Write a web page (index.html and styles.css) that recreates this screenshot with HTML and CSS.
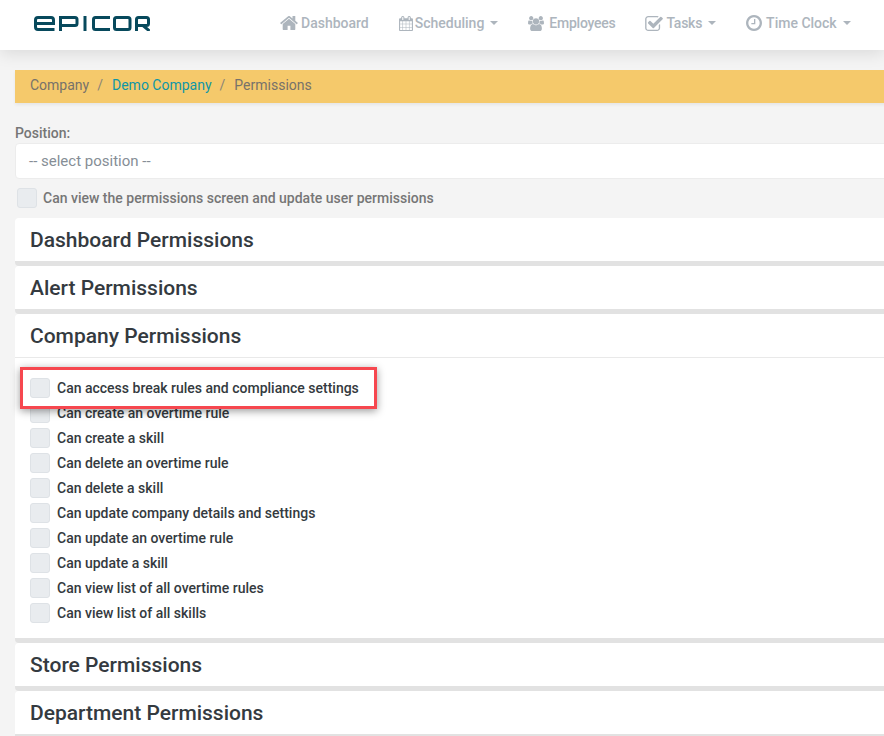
FILE: index.html
```html
<!DOCTYPE html>
<html lang="en">
<head>
<meta charset="utf-8">
<title>Permissions</title>
<link rel="stylesheet" href="styles.css">
</head>
<body>
<header class="navbar">
  <svg class="logo" viewBox="0 0 116 15" aria-label="Epicor" role="img">
    <g fill="none" stroke="#07495c" stroke-width="3">
      <path d="M1.500 7.500H19.500V4Q19.500 1.500 17 1.500H4Q1.500 1.500 1.500 4V11Q1.500 13.500 4 13.500H20.500"/>
      <path d="M26.500 15V1.500H41Q43 1.500 43 3.500V7.500Q43 9.500 41 9.500H27"/>
      <path d="M51 0V15"/>
      <path d="M76 1.500H61.500Q59.500 1.500 59.500 3.500V11.500Q59.500 13.500 61.500 13.500H76"/>
      <path d="M80.500 3.500Q80.500 1.500 82.500 1.500H94Q96 1.500 96 3.500V11.500Q96 13.500 94 13.500H82.500Q80.500 13.500 80.500 11.500Z"/>
      <path d="M102.500 15V3.500Q102.500 1.500 104.500 1.500H112.500Q114.500 1.500 114.500 3.500V7.500Q114.500 9.500 112.500 9.500H103M109 9.500L115.500 15"/>
    </g>
  </svg>
  <nav class="nav">
    <a class="nav-item"><svg class="ico ico-home" viewBox="90 256 1612 1280"><path d="M1472 992v480q0 26-19 45t-45 19h-384v-384h-256v384h-384q-26 0-45-19t-19-45v-480q0-1 .5-3t.5-3l575-474 575 474q1 2 1 6zm223-69l-62 74q-8 9-21 11h-3q-13 0-21-7l-692-577-692 577q-12 8-24 7-13-2-21-11l-62-74q-8-10-7-23.500t11-21.500l719-599q32-26 76-26t76 26l244 204v-195q0-14 9-23t23-9h192q14 0 23 9t9 23v408l219 182q10 8 11 21.500t-7 23.500z"/></svg>Dashboard</a>
    <a class="nav-item"><svg class="ico ico-cal" viewBox="64 0 1664 1792"><path d="M192 1664h288v-288h-288v288zm352 0h320v-288h-320v288zm-352-352h288v-320h-288v320zm352 0h320v-320h-320v320zm-352-384h288v-288h-288v288zm736 736h320v-288h-320v288zm-384-736h320v-288h-320v288zm768 736h288v-288h-288v288zm-384-352h320v-320h-320v320zm-352-864v-288q0-13-9.500-22.500t-22.500-9.500h-64q-13 0-22.500 9.500t-9.500 22.500v288q0 13 9.500 22.500t22.500 9.500h64q13 0 22.500-9.500t9.500-22.500zm736 864h288v-320h-288v320zm-384-384h320v-288h-320v288zm384 0h288v-288h-288v288zm32-480v-288q0-13-9.500-22.500t-22.500-9.500h-64q-13 0-22.500 9.500t-9.500 22.500v288q0 13 9.500 22.500t22.500 9.500h64q13 0 22.500-9.500t9.500-22.500zm384-64v1280q0 52-38 90t-90 38h-1408q-52 0-90-38t-38-90v-1280q0-52 38-90t90-38h128v-96q0-66 47-113t113-47h64q66 0 113 47t47 113v96h384v-96q0-66 47-113t113-47h64q66 0 113 47t47 113v96h128q52 0 90 38t38 90z"/></svg>Scheduling<span class="caret"></span></a>
    <a class="nav-item nav-tight"><svg class="ico ico-users" viewBox="-64 0 1920 1792"><path d="M529 896q-162 5-265 128h-134q-82 0-138-40.500t-56-118.500q0-353 124-353 6 0 43.500 21t97.500 42.500 119 21.500q67 0 133-23-5 37-5 66 0 139 81 256zm1071 637q0 120-73 189.500t-194 69.500h-874q-121 0-194-69.500t-73-189.500q0-53 3.500-103.500t14-109 26.500-108.500 43-97.500 62-81 85.500-53.500 111.500-20q10 0 43 21.500t73 48 107 48 135 21.500 135-21.500 107-48 73-48 43-21.500q61 0 111.500 20t85.500 53.500 62 81 43 97.500 26.500 108.500 14 109 3.500 103.500zm-1024-1277q0 106-75 181t-181 75-181-75-75-181 75-181 181-75 181 75 75 181zm704 384q0 159-112.500 271.500t-271.500 112.500-271.500-112.500-112.500-271.500 112.500-271.500 271.500-112.500 271.500 112.500 112.500 271.500zm576 225q0 78-56 118.500t-138 40.500h-134q-103-123-265-128 81-117 81-256 0-29-5-66 66 23 133 23 59 0 119-21.500t97.500-42.500 43.500-21q124 0 124 353zm-128-609q0 106-75 181t-181 75-181-75-75-181 75-181 181-75 181 75 75 181z"/></svg>Employees</a>
    <a class="nav-item nav-tight"><svg class="ico ico-check" viewBox="64 128 1664 1408"><path d="M1472 930v318q0 119-84.500 203.500t-203.500 84.500h-832q-119 0-203.500-84.500t-84.500-203.500v-832q0-119 84.500-203.500t203.500-84.500h832q63 0 117 25 15 7 18 23 3 17-9 29l-49 49q-10 10-23 10-3 0-9-2-23-6-45-6h-832q-66 0-113 47t-47 113v832q0 66 47 113t113 47h832q66 0 113-47t47-113v-254q0-13 9-22l64-64q10-10 23-10 6 0 12 3 20 8 20 29zm231-489l-814 814q-24 24-57 24t-57-24l-430-430q-24-24-24-57t24-57l110-110q24-24 57-24t57 24l263 263 647-647q24-24 57-24t57 24l110 110q24 24 24 57t-24 57z"/></svg>Tasks<span class="caret"></span></a>
    <a class="nav-item"><svg class="ico ico-clock" viewBox="0 128 1536 1536"><path d="M896 544v448q0 14-9 23t-23 9h-320q-14 0-23-9t-9-23v-64q0-14 9-23t23-9h224v-352q0-14 9-23t23-9h64q14 0 23 9t9 23zm416 352q0-148-73-273t-198-198-273-73-273 73-198 198-73 273 73 273 198 198 273 73 273-73 198-198 73-273zm224 0q0 209-103 385.500t-279.500 279.500-385.500 103-385.500-103-279.500-279.500-103-385.500 103-385.500 279.500-279.500 385.500-103 385.500 103 279.500 279.500 103 385.500z"/></svg>Time Clock<span class="caret"></span></a>
  </nav>
</header>

<main class="page">
  <ol class="breadcrumb">
    <li>Company</li>
    <li class="sep">/</li>
    <li><a class="crumb-link">Demo Company</a></li>
    <li class="sep">/</li>
    <li>Permissions</li>
  </ol>

  <label class="field-label">Position:</label>
  <div class="select">-- select position --</div>

  <div class="check-row top-check">
    <span class="box"></span><span>Can view the permissions screen and update user permissions</span>
  </div>

  <section class="card"><h2 class="card-title">Dashboard Permissions</h2></section>
  <section class="card"><h2 class="card-title">Alert Permissions</h2></section>
  <section class="card">
    <h2 class="card-title card-title-open">Company Permissions</h2>
    <div class="card-body">
      <div class="highlight"></div>
      <div class="check-row perm perm-first"><span class="box"></span><span>Can access break rules and compliance settings</span></div>
      <div class="check-row perm"><span class="box"></span><span>Can create an overtime rule</span></div>
      <div class="check-row perm"><span class="box"></span><span>Can create a skill</span></div>
      <div class="check-row perm"><span class="box"></span><span>Can delete an overtime rule</span></div>
      <div class="check-row perm"><span class="box"></span><span>Can delete a skill</span></div>
      <div class="check-row perm"><span class="box"></span><span>Can update company details and settings</span></div>
      <div class="check-row perm"><span class="box"></span><span>Can update an overtime rule</span></div>
      <div class="check-row perm"><span class="box"></span><span>Can update a skill</span></div>
      <div class="check-row perm"><span class="box"></span><span>Can view list of all overtime rules</span></div>
      <div class="check-row perm"><span class="box"></span><span>Can view list of all skills</span></div>
    </div>
  </section>
  <section class="card"><h2 class="card-title">Store Permissions</h2></section>
  <section class="card"><h2 class="card-title">Department Permissions</h2></section>
</main>
</body>
</html>
```

FILE: styles.css
```css
* {
  box-sizing: border-box;
}

html,
body {
  margin: 0;
  height: 736px;
  overflow: hidden;
}

body {
  background: #f4f4f4;
  font-family: Roboto, "Liberation Sans", sans-serif;
  font-size: 14px;
  color: #343a40;
}

.navbar {
  display: flex;
  align-items: center;
  height: 50px;
  background: #fff;
  box-shadow: 0 4px 16px rgba(0, 0, 0, 0.1);
  padding: 0 0 4px 34px;
  position: relative;
  z-index: 3;
}

.logo {
  display: block;
  width: 116px;
  height: 15px;
  margin-top: 1px;
  flex: none;
}

.nav {
  display: flex;
  align-items: center;
  gap: 30px;
  margin-left: 130px;
  white-space: nowrap;
}

.nav-item {
  display: flex;
  align-items: center;
  color: #adb5bd;
  font-weight: 500;
  font-size: 14px;
}

.nav-tight {
  letter-spacing: -0.25px;
}

.ico {
  display: block;
  fill: #adb5bd;
}

.ico-home {
  width: 18px;
  height: 14px;
  margin-right: 3px;
}

.ico-cal {
  width: 14px;
  height: 15px;
  margin-right: 2px;
}

.ico-users {
  width: 16px;
  height: 15px;
  margin-right: 5px;
}

.ico-check {
  width: 18px;
  height: 15px;
  margin-right: 3px;
}

.ico-clock {
  width: 16px;
  height: 16px;
  margin-right: 4px;
}

.caret {
  width: 0;
  height: 0;
  margin-left: 6px;
  border-left: 4px solid transparent;
  border-right: 4px solid transparent;
  border-top: 4px solid #adb5bd;
}

.page {
  width: 1000px;
  padding: 20px 0 0 15px;
}

.breadcrumb {
  display: flex;
  align-items: center;
  gap: 8px;
  list-style: none;
  margin: 0 0 21px;
  padding: 0 15px 4px;
  height: 33px;
  background: #f5c96b;
  box-shadow: 0 2px 3px rgba(0, 0, 0, 0.06);
  color: #77726a;
}

.sep {
  color: #8a8478;
  margin-right: 1px;
}

.crumb-link {
  color: #0f96a6;
}

.field-label {
  display: block;
  height: 19px;
  line-height: 18px;
  font-weight: 500;
  color: #767676;
}

.select {
  display: flex;
  align-items: center;
  height: 36px;
  padding-left: 13px;
  background: #fff;
  border: 1px solid #ececec;
  border-radius: 4px;
  font-size: 15px;
  color: #868e96;
}

.check-row {
  display: flex;
  align-items: center;
  font-weight: 500;
}

.box {
  flex: none;
  width: 20px;
  height: 20px;
  margin-right: 7px;
  background: #e9ecef;
  border: 1px solid #dee2e6;
  border-radius: 3px;
}

.top-check {
  height: 38px;
  padding-left: 2px;
  color: #767676;
  margin-bottom: 1px;
}

.top-check .box {
  margin-right: 6px;
}

.card {
  background: #fff;
  border-bottom: 5px solid #e2e2e2;
  border-radius: 4px 0 0 4px;
}

.card-title {
  margin: 0;
  height: 43px;
  line-height: 45px;
  padding-left: 15px;
  font-size: 21px;
  font-weight: 500;
  color: #343a40;
}

.card-title-open {
  height: 44px;
  border-bottom: 1px solid #e9e9e9;
}

.card-body {
  position: relative;
  padding: 17px 15px 13px;
}

.perm {
  height: 25px;
  font-weight: 500;
  position: relative;
}

.perm-first {
  z-index: 2;
}

.highlight {
  position: absolute;
  left: 5px;
  top: 9px;
  width: 357px;
  height: 42px;
  background: #fff;
  border: 3px solid #f6474f;
  box-shadow: 0 2px 8px rgba(0, 0, 0, 0.4);
  z-index: 1;
}
```
